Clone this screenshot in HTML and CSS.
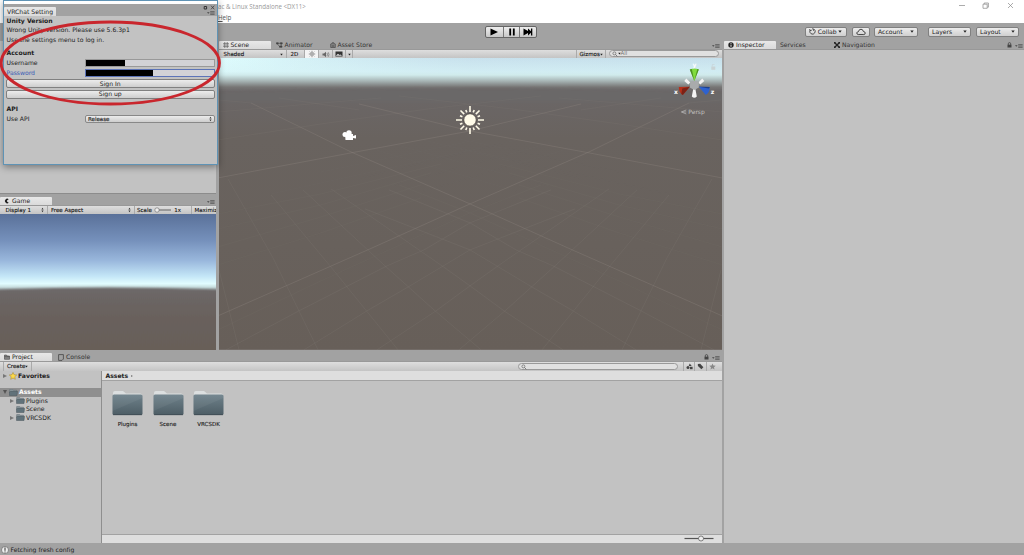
FILE: index.html
```
<!DOCTYPE html>
<html lang="en">
<head>
  <meta charset="UTF-8">
  <title>Unity</title>
  <link rel="stylesheet" href="styles.css">
</head>
<body>
  <svg width="0" height="0" class="defs">
    <defs>
      <linearGradient id="folderFill" x1="0" y1="0" x2="0" y2="1">
        <stop offset="0" stop-color="#6f828b"/>
        <stop offset="1" stop-color="#4d5d65"/>
      </linearGradient>
      <symbol id="folder" viewBox="0 0 31 26">
        <path d="M1 3 Q1 1 3 1 H11 L14 3.5 H28 Q30 3.5 30 5 V12 H1Z" fill="#dcdfe0"/>
        <rect x=".5" y="4.5" width="30" height="20.5" rx="1.5" fill="url(#folderFill)"/>
        <path d="M.5 21 L30.500 8 V5.500 Q30.500 4.500 29 4.500 H2 Q.5 4.500 .5 6Z" fill="#fff" opacity=".05"/>
        <path d="M1 24.700 H30" stroke="#3d4a50" stroke-width=".8"/>
      </symbol>
      <symbol id="folder-s" viewBox="0 0 9 7">
        <path d="M.5 1 Q.5 .3 1.200 .3 H3.500 L4.300 1.200 H7.500 V3 H.5Z" fill="#8b979c" stroke="#59666c" stroke-width=".4"/>
        <path d="M.5 6.500 V3 L1.500 2.300 H8.500 L8 6.500Z" fill="#61727a" stroke="#4a575d" stroke-width=".5"/>
      </symbol>
      <symbol id="menu" viewBox="0 0 8 4">
        <path d="M0 1.200 H2.600 L1.300 2.700Z" fill="#444"/>
        <path d="M3.200 .6 H7.600 M3.200 2 H7.600 M3.200 3.400 H7.600" stroke="#555" stroke-width=".8"/>
      </symbol>
      <symbol id="lock" viewBox="0 0 5 6">
        <path d="M1.300 3 V1.800 Q1.300 .6 2.500 .6 T3.700 1.800 V3" fill="none" stroke="currentColor" stroke-width=".8"/>
        <rect x=".5" y="2.700" width="4" height="2.800" fill="currentColor"/>
      </symbol>
      <symbol id="updown" viewBox="0 0 3 6">
        <path d="M.4 2.500 L1.500 .8 L2.600 2.500Z M.4 3.500 L1.500 5.200 L2.600 3.500Z" fill="#333"/>
      </symbol>
      <symbol id="down" viewBox="0 0 4 3">
        <path d="M.3 .5 H3.700 L2 2.700Z" fill="#222"/>
      </symbol>
      <symbol id="search" viewBox="0 0 6 6">
        <circle cx="2.400" cy="2.400" r="1.500" fill="none" stroke="#666" stroke-width=".7"/>
        <path d="M3.500 3.500 L5.300 5.300" stroke="#666" stroke-width=".8"/>
      </symbol>
    </defs>
  </svg>

  <div class="editor">
    <div class="titlebar">
      <div class="titles">
        <div class="title">ac &amp; Linux Standalone &lt;DX11&gt;</div>
        <div class="menu"><u>H</u>elp</div>
      </div>
      <svg class="winbtns" width="58" height="10" viewBox="0 0 58 10" fill="none" stroke="#888" stroke-width=".7">
        <path d="M1 5.500 H7"/>
        <path d="M25 4.200 H29.200 V8.300 H25Z M26.200 4 V3 H30.400 V7.200 H29.400"/>
        <path d="M50 3 L55 8 M55 3 L50 8"/>
      </svg>
    </div>

    <div class="toolbar">
      <div class="play">
        <span><svg width="17" height="11"><path d="M4.500 1.500 L12 5 L4.500 8.500Z"/></svg></span>
        <span><svg width="17" height="11"><path d="M5.300 1.500 H7.100 V8.500 H5.300Z M8.900 1.500 H10.700 V8.500 H8.900Z"/></svg></span>
        <span><svg width="17" height="11"><path d="M3.500 1.500 L8 4 V1.500 L11 4.200 V1.500 H12.300 V8.500 H11 V5.800 L8 8.500 V6 L3.500 8.500Z"/></svg></span>
      </div>
      <div class="tools">
        <div class="tbtn collab">
          <svg width="7" height="7" viewBox="0 0 7 7" fill="none" stroke="#333" stroke-width=".8"><path d="M1.200 2 A2.700 2.700 0 1 0 5 1.200 M.6 1 L1.200 2.600 L2.800 2.200 M3 .8 L5 1.200 L4.400 2.800"/></svg>
          Collab<svg width="4" height="3"><use href="#down"/></svg>
        </div>
        <div class="tbtn cloud">
          <svg width="10" height="8" viewBox="0 0 9 7"><path d="M2 5.800 Q.6 5.600 .7 4.300 Q1 3.200 2.200 3.200 Q2.600 1 4.500 1 Q6.300 1.100 6.600 3 Q8.300 3.200 8.300 4.500 Q8.200 5.800 7 5.800Z" fill="none" stroke="#333" stroke-width=".8"/></svg>
        </div>
        <div class="tbtn account">Account<svg width="4" height="3"><use href="#down"/></svg></div>
        <div class="tbtn layers">Layers<svg width="4" height="3"><use href="#down"/></svg></div>
        <div class="tbtn layout">Layout<svg width="4" height="3"><use href="#down"/></svg></div>
      </div>
    </div>

    <div class="main">
      <div class="work">
        <div class="upper">
          <div class="left">
            <div class="hidden-panel"></div>
            <div class="tabs">
              <div class="tab on game-tab">
                <svg width="6" height="6" viewBox="0 0 6 6"><path d="M4.700 1.200 A2.300 2.300 0 1 0 4.700 4.800 L3 3.600 V2.400Z" fill="#222"/></svg>
                Game
              </div>
              <svg class="pmenu" width="8" height="4"><use href="#menu"/></svg>
            </div>
            <div class="bar game-bar">
              <div class="cell display">Display 1<svg width="3" height="6"><use href="#updown"/></svg></div>
              <div class="cell aspect">Free Aspect<svg width="3" height="6"><use href="#updown"/></svg></div>
              <div class="cell scale">Scale
                <svg width="18" height="6" viewBox="0 0 18 6"><path d="M3 3 H17" stroke="#555" stroke-width=".9"/><circle cx="3" cy="3" r="2.200" fill="#eee" stroke="#666" stroke-width=".6"/></svg>
                <span>1x</span>
              </div>
              <div class="cell maxi">Maximize</div>
            </div>
            <svg class="game-view" viewBox="0 0 216 136" preserveAspectRatio="none">
              <defs>
                <linearGradient id="gsky" x1="0" y1="0" x2="0" y2="75" gradientUnits="userSpaceOnUse">
                  <stop offset="0" stop-color="#5a7199"/>
                  <stop offset=".35" stop-color="#7590bb"/>
                  <stop offset=".62" stop-color="#99b7dc"/>
                  <stop offset=".83" stop-color="#c4e6f7"/>
                  <stop offset=".93" stop-color="#e2fdff"/>
                  <stop offset="1" stop-color="#b8cccd"/>
                </linearGradient>
                <linearGradient id="gground" x1="0" y1="73" x2="0" y2="136" gradientUnits="userSpaceOnUse">
                  <stop offset="0" stop-color="#6d6869"/>
                  <stop offset=".5" stop-color="#69615c"/>
                  <stop offset="1" stop-color="#675f59"/>
                </linearGradient>
                <filter id="soft"><feGaussianBlur stdDeviation="0 1.200"/></filter>
              </defs>
              <rect width="216" height="80" fill="url(#gsky)"/>
              <path d="M-10 75.500 Q108 71.500 226 75.500 V150 H-10Z" fill="url(#gground)" filter="url(#soft)"/>
            </svg>
          </div>

          <div class="scene">
            <div class="tabs">
              <div class="tab on scene-tab">
                <svg width="6" height="6" viewBox="0 0 6 6"><path d="M0 1.800 H6 M0 4.200 H6 M1.800 0 V6 M4.200 0 V6" stroke="#555" stroke-width=".7"/></svg>
                Scene
              </div>
              <div class="tab animator">
                <svg width="7" height="6" viewBox="0 0 7 6"><path d="M.5 .7 H2.200 V2 H.5Z M4.300 .7 H6.200 V2 H4.300Z M3.500 4 H6 V5.300 H3.500Z M1.500 2 L3.500 4.500 M2.200 1.300 H4.300 M5.200 2 V4" stroke="#444" stroke-width=".6" fill="#444"/></svg>
                Animator
              </div>
              <div class="tab">
                <svg width="6" height="6" viewBox="0 0 6 6"><path d="M.7 2 H5.300 V5.500 H.7Z M1.800 2 Q2 .4 3 .4 T4.200 2 M2 3 V5 M3 3 V5 M4 3 V5" fill="none" stroke="#444" stroke-width=".7"/></svg>
                Asset Store
              </div>
              <svg class="pmenu" width="8" height="4"><use href="#menu"/></svg>
            </div>
            <div class="bar scene-bar">
              <div class="cell shaded">Shaded<svg width="3" height="3"><use href="#down"/></svg></div>
              <div class="cell two-d">2D</div>
              <div class="cell lit">
                <svg width="8" height="8" viewBox="0 0 8 8"><circle cx="4" cy="4" r="1.300" fill="none" stroke="#555" stroke-width=".7"/><path d="M4 .8 V2 M4 6 V7.200 M.8 4 H2 M6 4 H7.200 M1.700 1.700 L2.500 2.500 M5.500 5.500 L6.300 6.300 M6.300 1.700 L5.500 2.500 M2.500 5.500 L1.700 6.300" stroke="#555" stroke-width=".6"/></svg>
              </div>
              <div class="cell audio">
                <svg width="8" height="7" viewBox="0 0 8 7"><path d="M.5 2.500 H2 L4 .8 V6.200 L2 4.500 H.5Z" fill="#666"/><path d="M5 2 Q6 3.500 5 5 M6.200 1.200 Q7.800 3.500 6.200 5.800" fill="none" stroke="#666" stroke-width=".6"/></svg>
              </div>
              <div class="cell fx">
                <svg width="8" height="6" viewBox="0 0 8 6"><rect x=".5" y=".5" width="7" height="5" fill="#333"/><path d="M1 4.500 L3 2.800 L4.500 4 L5.500 3.500 L7 4.800 H1Z" fill="#ddd"/></svg>
              </div>
              <div class="cell fxmenu"><svg width="3" height="3"><use href="#down"/></svg></div>
              <div class="cell gizmos">Gizmos<svg width="3" height="3"><use href="#down"/></svg></div>
              <div class="search all"><svg width="6" height="6"><use href="#search"/></svg><svg width="3" height="3"><use href="#down"/></svg>All</div>
            </div>
            <svg class="scene-view" viewBox="0 0 503 292" preserveAspectRatio="none">
              <defs>
                <linearGradient id="ssky" x1="0" y1="0" x2="1" y2="0">
                  <stop offset="0" stop-color="#e0ffff"/>
                  <stop offset=".45" stop-color="#d8f4f7"/>
                  <stop offset="1" stop-color="#d2eff1"/>
                </linearGradient>
                <linearGradient id="high" x1="0" y1="0" x2="1" y2="0">
                  <stop offset="0" stop-color="#c4dcea" stop-opacity=".1"/>
                  <stop offset=".5" stop-color="#c4dcea"/>
                </linearGradient>
                <linearGradient id="haze" x1="0" y1="0" x2="0" y2="33" gradientUnits="userSpaceOnUse">
                  <stop offset="0" stop-color="#d8f4f7" stop-opacity="0"/>
                  <stop offset=".4" stop-color="#d8f4f7" stop-opacity=".6"/>
                  <stop offset=".52" stop-color="#cfe9ea"/>
                  <stop offset=".7" stop-color="#a6b3b3"/>
                  <stop offset=".88" stop-color="#777675"/>
                  <stop offset="1" stop-color="#6b6768"/>
                </linearGradient>
                <linearGradient id="sground" x1="0" y1="28" x2="0" y2="292" gradientUnits="userSpaceOnUse">
                  <stop offset="0" stop-color="#6b6768"/>
                  <stop offset=".2" stop-color="#69635f"/>
                  <stop offset="1" stop-color="#675f59"/>
                </linearGradient>
                <g id="lines" fill="none" stroke="#8b837d" stroke-width=".7">
                  <path d="M32 45 L132 94 L251 146 L351 191 L503 258 M140 46 L251 73 L365 94 L503 120" opacity=".5"/>
                  <path d="M293 51 L400 66 L503 82 M0 42 L32 45 M60 40 L140 52 M180 38 L293 51 M340 40 L503 54" opacity=".2"/>
                  <path d="M9 121 L54 200 L99 292 M52 137 L111 208 L179 292 M84 132 L166 208 L216 253 L262 292 M112 131 L223 208 L251 228 L285 253 L344 292" opacity=".25"/>
                  <path d="M146 151 L251 192 L311 228 L354 253 L417 292 M170 132 L251 165 L297 192 L334 208 L422 253 L495 292 M0 212 L20 292" opacity=".25"/>
                  <path d="M180 127 L251 155 L400 223 L503 272 M300 140 L400 175 L503 207 M300 127 L400 159 L503 189 M290 115 L400 147 L503 171 M280 106 L400 136 L503 156" opacity=".12"/>
                  <path d="M150 90 L300 134 M170 85 L330 128 M200 81 L360 120 M240 81 L400 114 M240 90 L450 136" opacity=".06"/>
                </g>
              </defs>
              <rect width="503" height="292" fill="url(#sground)"/>
              <rect width="503" height="33" fill="url(#ssky)"/>
              <rect width="503" height="16" fill="url(#high)" opacity=".8"/>
              <rect width="503" height="33" fill="url(#haze)"/>
              <path d="M-5 33.500 Q251 27 508 33.500 V44 H-5Z" fill="#6b6768" filter="url(#soft)"/>
              <use href="#lines"/>
              <use href="#lines" transform="translate(502 0) scale(-1 1)"/>
              <!-- camera gizmo -->
              <g fill="#fff" transform="translate(123 72)">
                <circle cx="3" cy="4.500" r="2.500"/><circle cx="7" cy="3" r="2.700"/>
                <path d="M3 4 H11 V6 L14 5 V8.500 L11 8 V10 H3.500Z"/>
              </g>
              <!-- light gizmo -->
              <g transform="translate(251 62)" stroke="#4f4944" fill="none">
                <circle r="6.300" fill="#fffbe8" stroke-width="1"/>
                <g stroke="#fffbe8" stroke-width="1.600">
                  <path d="M0 -8 V-14 M0 8 V14 M-8 0 H-14 M8 0 H14"/>
                  <path d="M5.800 -5.800 L9.500 -9.500 M-5.800 -5.800 L-9.500 -9.500 M5.800 5.800 L9.500 9.500 M-5.800 5.800 L-9.500 9.500"/>
                  <path d="M3.200 -7.600 L4.200 -10 M-3.200 -7.600 L-4.200 -10 M3.200 7.600 L4.200 10 M-3.200 7.600 L-4.200 10 M7.600 3.200 L10 4.200 M7.600 -3.200 L10 -4.200 M-7.600 3.200 L-10 4.200 M-7.600 -3.200 L-10 -4.200"/>
                </g>
              </g>
              <!-- orientation gizmo -->
              <g transform="translate(475.300 27.500)">
                <path d="M-6 -1 L-10 -4.500 L-8 -7 L-4 -3Z M6 -1 L10 -4.500 L8 -7 L4 -3Z M-1 3 L-2.500 11 Q0 13.500 2.500 11 L1 3Z" fill="#f4f4f4"/>
                <path d="M-4 -3.500 L0 -5 L4.500 -3.500 L4.500 2 L0 4.500 L-4.500 2Z" fill="#a9abac"/>
                <path d="M-4.500 1.200 L-15.500 1.500 Q-15.500 7 -11.500 9.500Z" fill="#b5301a"/>
                <path d="M-4.500 1.200 L-11.500 9.500 L-13 8.500 L-12 3Z" fill="#7b2216"/>
                <path d="M4.500 1.200 L15.500 1.500 Q15.500 7 11.500 9.500Z" fill="#2e62cf"/>
                <path d="M4.500 1.200 L15.500 1.500 L14.500 3Z" fill="#1f4088"/>
                <path d="M0 -4.500 L-4.500 -16 Q0 -18 4.500 -16Z" fill="#80dc3d"/>
                <path d="M0 -4.500 L-4.500 -16 L-2.500 -16.500Z M0 -4.500 L4.500 -16 L3 -16.500Z" fill="#4d9126"/>
                <text x="-1.800" y="-18.500" class="axis">y</text>
                <text x="-20.300" y="9" class="axis">x</text>
                <text x="16.500" y="9" class="axis">z</text>
                <path d="M-8 24.500 L-13 26.500 L-8 28.500 M-12 26.500 H-8" fill="none" stroke="#bbb" stroke-width=".7"/>
                <text x="-6" y="28.800" class="persp">Persp</text>
                <g fill="#c9d3d5"><rect x="17" y="-19" width="4" height="3.300"/><path d="M18 -19 V-21 H20.200" fill="none" stroke="#c9d3d5" stroke-width=".7"/></g>
              </g>
            </svg>
          </div>
        </div>

        <div class="project">
          <div class="tabs">
            <div class="tab on project-tab">
              <svg width="6" height="6" viewBox="0 0 6 6"><path d="M.5 1 H2.500 L3.200 2 H5.500 V5.300 H.5Z M.5 2.700 H5.500" fill="#888" stroke="#444" stroke-width=".6"/></svg>
              Project
            </div>
            <div class="tab">
              <svg width="6" height="7" viewBox="0 0 6 7"><path d="M.6 .6 H5.400 V5 L4 6.400 H.6Z" fill="none" stroke="#444" stroke-width=".8"/></svg>
              Console
            </div>
            <svg class="plock" width="5" height="6"><use href="#lock"/></svg>
            <svg class="pmenu" width="8" height="4"><use href="#menu"/></svg>
          </div>
          <div class="bar project-bar">
            <div class="cell create">Create<svg width="3" height="3"><use href="#down"/></svg></div>
            <div class="search assets-search"><svg width="6" height="6"><use href="#search"/></svg></div>
            <div class="cell pico"><svg width="7" height="7" viewBox="0 0 7 7" fill="#444"><path d="M3.700 .5 L5.700 3 H2.700Z"/><circle cx="2" cy="4.600" r="1.500"/><rect x="4" y="3.800" width="2.600" height="2.400"/></svg></div>
            <div class="cell pico"><svg width="7" height="7" viewBox="0 0 7 7"><path d="M.8 1 L3.200 .8 L6.400 4.200 L4.400 6.300 L.9 3Z" fill="#444"/></svg></div>
            <div class="cell pico"><svg width="7" height="7" viewBox="0 0 7 7"><path d="M3.500 .4 L4.400 2.500 L6.700 2.700 L5 4.200 L5.500 6.500 L3.500 5.300 L1.500 6.500 L2 4.200 L.3 2.700 L2.600 2.500Z" fill="#888"/></svg></div>
          </div>
          <div class="browser">
            <div class="tree">
              <div class="item fav"><i class="arrow"></i>
                <svg width="8" height="8" viewBox="0 0 8 8"><path d="M4 .4 L5.100 2.700 L7.700 3 L5.800 4.700 L6.300 7.300 L4 6 L1.700 7.300 L2.200 4.700 L.3 3 L2.900 2.700Z" fill="#fbd94b" stroke="#a88420" stroke-width=".5"/></svg>
                Favorites
              </div>
              <div class="item root"><i class="arrow open"></i><svg width="9" height="7"><use href="#folder-s"/></svg>Assets</div>
              <div class="item child"><i class="arrow"></i><svg width="9" height="7"><use href="#folder-s"/></svg>Plugins</div>
              <div class="item child"><i class="arrow none"></i><svg width="9" height="7"><use href="#folder-s"/></svg>Scene</div>
              <div class="item child"><i class="arrow"></i><svg width="9" height="7"><use href="#folder-s"/></svg>VRCSDK</div>
            </div>
            <div class="files">
              <div class="crumbs">Assets<i class="arrow"></i></div>
              <div class="grid">
                <div class="file"><svg width="31" height="26"><use href="#folder"/></svg>Plugins</div>
                <div class="file"><svg width="31" height="26"><use href="#folder"/></svg>Scene</div>
                <div class="file"><svg width="31" height="26"><use href="#folder"/></svg>VRCSDK</div>
              </div>
              <div class="zoombar">
                <svg width="30" height="7" viewBox="0 0 30 7"><path d="M.5 3.500 H29.500" stroke="#555" stroke-width="1.200"/><circle cx="17" cy="3.500" r="2.500" fill="#eee" stroke="#555" stroke-width=".7"/></svg>
              </div>
            </div>
          </div>
        </div>
      </div>

      <div class="inspector">
        <div class="tabs">
          <div class="tab on inspector-tab">
            <svg width="6" height="6" viewBox="0 0 6 6"><circle cx="3" cy="3" r="2.700" fill="#222"/><path d="M3 1.200 V2 M3 2.600 V4.800" stroke="#fff" stroke-width=".9"/></svg>
            Inspector
          </div>
          <div class="tab services">Services</div>
          <div class="tab">
            <svg width="6" height="6" viewBox="0 0 6 6"><path d="M.5 .5 L5.500 5.500 M5.500 .5 L.5 5.500" stroke="#222" stroke-width="1.300"/><path d="M0 0 H2 L0 2Z M6 0 V2 L4 0Z M0 6 V4 L2 6Z M6 6 H4 L6 4Z" fill="#222"/></svg>
            Navigation
          </div>
          <svg class="plock" width="5" height="6"><use href="#lock"/></svg>
          <svg class="pmenu" width="8" height="4"><use href="#menu"/></svg>
        </div>
        <div class="inspector-body"></div>
      </div>
    </div>

    <div class="status">
      <svg width="8" height="8" viewBox="0 0 8 8"><circle cx="4" cy="4" r="3.500" fill="#eee" stroke="#555" stroke-width=".6"/><path d="M4 1.500 V4.800 M4 5.500 V6.500" stroke="#333" stroke-width="1"/></svg>
      Fetching fresh config
    </div>
  </div>

  <div class="window">
    <div class="window-head">
      <div class="tab on">VRChat Setting</div>
      <div class="window-icons">
        <svg width="12" height="5" viewBox="0 0 12 5" fill="none" stroke="#333"><path d="M1.200 1.500 H3.600 V4 H1.200Z" stroke-width="1"/><path d="M8 .7 L11.300 4.300 M11.300 .7 L8 4.300" stroke-width=".7"/></svg>
        <svg width="8" height="4"><use href="#menu"/></svg>
      </div>
    </div>
    <div class="form">
      <div class="row head">Unity Version</div>
      <div class="row">Wrong Unity version. Please use 5.6.3p1</div>
      <div class="row">Use the settings menu to log in.</div>
      <div class="row head account-head">Account</div>
      <div class="row"><label>Username</label><div class="input"><span class="mask user"></span></div></div>
      <div class="row focus"><label>Password</label><div class="input"><span class="mask pass"></span></div></div>
      <div class="button">Sign In</div>
      <div class="button">Sign up</div>
      <div class="row head api-head">API</div>
      <div class="row"><label>Use API</label><div class="select">Release<svg width="3" height="6"><use href="#updown"/></svg></div></div>
    </div>
  </div>

  <svg class="mark" width="224" height="110"><ellipse cx="110.300" cy="63" rx="109.200" ry="41" fill="none" stroke="#c9262d" stroke-width="2.800"/></svg>
</body>
</html>
```
FILE: styles.css
```
* {
  box-sizing: border-box;
}
body {
  margin: 0;
  font-family: "DejaVu Sans", sans-serif;
  font-size: 6.1px;
  line-height: 8px;
  color: #1c1c1c;
  background: #a2a2a2;
  overflow: hidden;
}
svg {
  display: block;
  flex: none;
}
.defs {
  position: absolute;
}
.editor {
  height: 555px;
  display: flex;
  flex-direction: column;
}

/* title and toolbar */
.titlebar {
  height: 23px;
  background: #fff;
  display: flex;
  justify-content: space-between;
  padding-left: 218px;
  font-family: "Open Sans", sans-serif;
  font-size: 6.2px;
}
.title {
  height: 13px;
  line-height: 13px;
  color: #999;
}
.menu {
  line-height: 9px;
  color: #555;
}
.winbtns {
  margin-right: 8px;
}
.toolbar {
  height: 17.500px;
  display: flex;
  padding: 2.500px 5px 0 485px;
  justify-content: space-between;
}
.play {
  display: flex;
  height: 12px;
  border: 1px solid #666;
  border-radius: 2px;
  background: linear-gradient(#eee, #c8c8c8);
}
.play span {
  width: 16.700px;
  overflow: hidden;
}
.play span + span {
  border-left: 1px solid #777;
}
.tools {
  display: flex;
  padding-top: 1px;
}
.tbtn {
  height: 10.200px;
  display: flex;
  align-items: center;
  justify-content: space-between;
  padding: 0 3.500px 0 3px;
  border: 1px solid #808080;
  border-radius: 2px;
  background: linear-gradient(#ececec, #cfcfcf);
}
.collab {
  width: 42px;
  margin-right: 5px;
}
.cloud {
  width: 18px;
  margin-right: 4px;
}
.account {
  width: 44px;
  margin-right: 10px;
}
.layers {
  width: 43px;
  margin-right: 5px;
}
.layout {
  width: 43px;
}

/* docks */
.main {
  flex: 1;
  min-height: 0;
  display: flex;
  gap: 2.500px;
}
.work {
  width: 721.500px;
  display: flex;
  flex-direction: column;
}
.upper {
  height: 309.500px;
  display: flex;
  gap: 2.500px;
}
.left {
  width: 216px;
  display: flex;
  flex-direction: column;
  overflow: hidden;
}
.hidden-panel {
  height: 153.500px;
  background: #c2c2c2;
  border-bottom: 1px solid #8c8c8c;
}
.scene {
  flex: 1;
  min-width: 0;
  display: flex;
  flex-direction: column;
}
.tabs {
  height: 8.700px;
  display: flex;
  align-items: center;
  flex: none;
}
.left .tabs {
  height: 11px;
  padding-top: 2.500px;
}
.tab {
  height: 8.500px;
  display: flex;
  align-items: center;
  gap: 2px;
  padding: .8px 0 0 5px;
  color: #333;
  white-space: nowrap;
}
.tab.on {
  background: linear-gradient(#e8e8e8, #dadada);
  border-radius: 1px 1px 0 0;
  color: #222;
}
.game-tab {
  width: 52px;
  padding-left: 4px;
}
.scene-tab {
  width: 52px;
  padding-left: 4px;
}
.project-tab {
  width: 52px;
  padding-left: 4px;
}
.project .tab + .tab {
  padding-left: 6px;
}
.animator {
  width: 54px;
}
.inspector-tab {
  width: 52px;
  padding-left: 4px;
}
.services {
  width: 53px;
  padding-left: 4px;
}
.pmenu {
  margin-left: auto;
  margin-right: 1.500px;
  align-self: flex-end;
  margin-bottom: 1px;
}
.plock {
  margin-left: auto;
  margin-right: 3px;
  color: #444;
}
.plock + .pmenu {
  margin-left: 0;
}
.bar {
  height: 9px;
  flex: none;
  display: flex;
  background: linear-gradient(#dedede, #c4c4c4);
  border-top: 1px solid #999;
  font-size: 5.500px;
  line-height: 7px;
  color: #111;
  -webkit-text-stroke: .1px #111;
  white-space: nowrap;
  overflow: hidden;
}
.cell {
  flex: none;
  display: flex;
  align-items: center;
  justify-content: space-between;
  padding: 0 3px;
  border-right: 1px solid #aaa;
}
.display {
  width: 48px;
  padding-left: 5.500px;
}
.aspect {
  width: 87px;
}
.scale {
  width: 57px;
  padding: 0 10px 0 2px;
}
.maxi {
  border: 0;
  padding-left: 2.500px;
}
.game-view {
  width: 216px;
  flex: 1;
  min-height: 0;
}
.shaded {
  width: 68px;
  padding-left: 5px;
}
.two-d {
  width: 18px;
  padding-left: 4px;
}
.lit {
  width: 14px;
  background: #f4f4f4;
}
.audio {
  width: 14px;
}
.fx {
  width: 13px;
  padding: 0 2px;
}
.fxmenu {
  width: 7px;
  padding: 0 2px;
}
.gizmos {
  margin-left: auto;
  width: 30px;
  border-left: 1px solid #aaa;
}
.search {
  height: 7px;
  border: 1px solid #999;
  border-radius: 4px;
  background: #e0e0e0;
  display: flex;
  align-items: center;
  padding-left: 2px;
  color: #777;
  -webkit-text-stroke: 0;
}
.all {
  width: 110px;
  margin: 0 3px;
}
.scene-view {
  width: 503px;
  flex: 1;
  min-height: 0;
}
.axis {
  font: bold 6px "DejaVu Sans", sans-serif;
  fill: #fff;
}
.persp {
  font: 6px "DejaVu Sans", sans-serif;
  fill: #c4c2c0;
}

/* project browser */
.project {
  flex: 1;
  min-height: 0;
  padding-top: 2.500px;
  display: flex;
  flex-direction: column;
}
.project-bar {
  height: 10px;
}
.create {
  width: 29px;
  margin-left: 3px;
  border-left: 1px solid #aaa;
}
.assets-search {
  width: 160px;
  margin: 1px 5px 0 auto;
}
.pico {
  width: 11.500px;
  padding: 0 2px;
  border-right: 0;
  border-left: 1px solid #aaa;
}
.pico:last-child {
  width: 16px;
}
.browser {
  flex: 1;
  min-height: 0;
  display: flex;
}
.tree {
  width: 102px;
  background: #c2c2c2;
  border-right: 1px solid #8e8e8e;
}
.item {
  height: 8.500px;
  display: flex;
  align-items: center;
  gap: 1.500px;
  padding-left: 3px;
}
.fav {
  height: 9.500px;
  font-weight: bold;
  margin-bottom: 7.500px;
}
.root {
  background: #8f8f8f;
  color: #fff;
  font-weight: bold;
}
.child {
  padding-left: 10px;
}
.arrow {
  width: 4px;
  border: 2px solid transparent;
  border-left: 4px solid #777;
  border-right: 0;
}
.arrow.open {
  border: 2px solid transparent;
  border-top: 4px solid #555;
  border-bottom: 0;
}
.arrow.none {
  border-color: transparent;
}
.files {
  flex: 1;
  background: #c2c2c2;
  display: flex;
  flex-direction: column;
}
.crumbs {
  height: 9.500px;
  display: flex;
  align-items: center;
  gap: 3px;
  padding: 1px 0 0 3.500px;
  background: #dedede;
  border-bottom: 1px solid #a2a2a2;
  font-weight: bold;
}
.crumbs .arrow {
  width: 2px;
  border-width: 1px 0 1px 2px;
}
.grid {
  flex: 1;
  display: flex;
  gap: 9.500px;
  padding: 9.500px 0 0 10px;
}
.file {
  width: 31px;
  display: flex;
  flex-direction: column;
  align-items: center;
  gap: 4px;
  font-size: 5.500px;
  -webkit-text-stroke: .1px #111;
}
.zoombar {
  height: 9.500px;
  background: #dedede;
  border-top: 1px solid #a2a2a2;
  display: flex;
  align-items: center;
  justify-content: flex-end;
  padding-right: 8px;
}
.inspector {
  flex: 1;
  display: flex;
  flex-direction: column;
}
.inspector-body {
  flex: 1;
  background: #c2c2c2;
  border-top: 1px solid #989898;
}
.status {
  height: 12px;
  display: flex;
  align-items: center;
  gap: 1.500px;
  padding: 1.500px 0 0 1px;
}

/* floating VRChat window */
.window {
  position: absolute;
  left: 3px;
  top: 0;
  width: 215px;
  height: 165px;
  border: 1px solid #5f93b5;
  background: #c2c2c2;
  box-shadow: 0 2px 7px rgba(0, 0, 0, .4);
}
.window-head {
  height: 14.500px;
  border-top: 3px solid #fff;
  background: #a2a2a2;
  display: flex;
  justify-content: space-between;
  align-items: flex-end;
}
.window-head .tab {
  width: 52px;
  padding-left: 3px;
}
.window-icons {
  height: 11px;
  display: flex;
  flex-direction: column;
  justify-content: space-between;
  align-items: flex-end;
  padding: 0 2px 1px 0;
}
.form {
  padding: .4px 2px 0 1.500px;
}
.row {
  height: 9.600px;
  display: flex;
  align-items: center;
  padding-left: 1px;
}
.row label {
  width: 78.500px;
}
.head {
  font-weight: bold;
}
.account-head {
  margin-top: 4px;
}
.api-head {
  margin-top: 5.500px;
}
.input {
  flex: 1;
  height: 8px;
  border: 1px solid #999;
  background: #d2d2d6;
  display: flex;
}
.mask {
  background: #000;
}
.user {
  width: 39px;
}
.pass {
  width: 67px;
}
.focus {
  color: #3a5bb5;
}
.focus .input {
  border-color: #5d74b8;
}
.button {
  height: 9.500px;
  margin-top: 1.300px;
  border: 1px solid #808080;
  border-radius: 2px;
  background: linear-gradient(#ececec, #cdcdcd);
  display: flex;
  align-items: center;
  justify-content: center;
}
.select {
  flex: 1;
  height: 8px;
  border: 1px solid #888;
  border-radius: 2px;
  background: linear-gradient(#ececec, #cdcdcd);
  display: flex;
  align-items: center;
  justify-content: space-between;
  padding: 0 2px;
  font-size: 5.500px;
  -webkit-text-stroke: .1px #111;
}
.mark {
  position: absolute;
  left: 0;
  top: 0;
}
```
